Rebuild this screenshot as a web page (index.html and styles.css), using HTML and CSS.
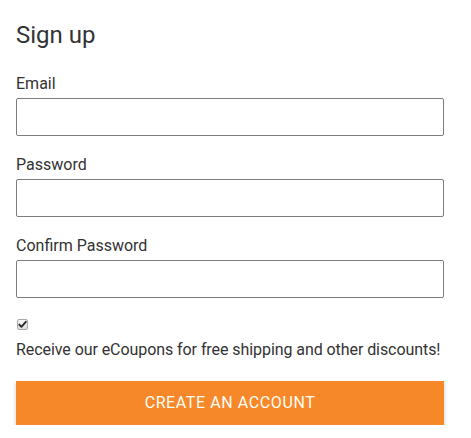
FILE: index.html
```html
<!DOCTYPE html>
<html>
<head>
<meta charset="utf-8">
<link rel="stylesheet" href="styles.css">
</head>
<body>
<form class="signup">
  <h1 class="title">Sign up</h1>
  <div class="field">
    <label class="label" for="email">Email</label>
    <input class="input" id="email" type="email">
  </div>
  <div class="field">
    <label class="label" for="pw">Password</label>
    <input class="input" id="pw" type="password">
  </div>
  <div class="field">
    <label class="label" for="pw2">Confirm Password</label>
    <input class="input" id="pw2" type="password">
  </div>
  <div class="check-wrap">
    <input class="check" type="checkbox" checked>
    <svg class="check-mark" width="11" height="11" viewBox="0 0 11 11"><path d="M2.3 5.6 L4.4 7.8 L8.8 2.8" fill="none" stroke="#2b2b2b" stroke-width="1.9" stroke-linecap="round" stroke-linejoin="round"/></svg>
  </div>
  <p class="promo">Receive our eCoupons for free shipping and other discounts!</p>
  <button class="submit" type="button">Create an account</button>
</form>
</body>
</html>
```
FILE: styles.css
```css
html, body {
  margin: 0;
  padding: 0;
  background: #fff;
}
body {
  font-family: Roboto, "Liberation Sans", Arial, sans-serif;
  color: #333;
}
.signup {
  display: flex;
  flex-direction: column;
  width: 428px;
  padding: 21px 0 0 16px;
}
.title {
  margin: 0 0 25px;
  font-size: 24px;
  line-height: 28px;
  font-weight: 400;
  color: #333;
}
.field {
  display: flex;
  flex-direction: column;
  margin-bottom: 19px;
}
.label {
  font-size: 16px;
  line-height: 19px;
  margin-bottom: 5px;
  color: #333;
}
.input {
  box-sizing: border-box;
  height: 38px;
  width: 100%;
  margin: 0;
  border: 1px solid #7c7c7c;
  border-radius: 2px;
  background: #fff;
}
.check-wrap {
  position: relative;
  width: 11px;
  height: 11px;
  margin: 2px 0 0 1px;
}
.check {
  appearance: none;
  -webkit-appearance: none;
  box-sizing: border-box;
  display: block;
  width: 11px;
  height: 11px;
  margin: 0;
  border: 1px solid #a9a9a9;
  border-radius: 2px;
  background: linear-gradient(#f6f6f6, #dedede);
}
.check-mark {
  position: absolute;
  left: 0;
  top: 0;
}
.promo {
  margin: 10px 0 22px;
  font-size: 16px;
  line-height: 19px;
  letter-spacing: -0.07px;
  color: #333;
  white-space: nowrap;
}
.submit {
  width: 100%;
  height: 44px;
  margin: 0;
  padding: 0;
  border: 0;
  background: #f7882a;
  color: #fffdf5;
  font-family: Roboto, "Liberation Sans", Arial, sans-serif;
  font-size: 16px;
  line-height: 44px;
  letter-spacing: 0.6px;
  text-transform: uppercase;
  box-shadow: 0 2px 4px rgba(0, 0, 0, 0.22);
}
```
